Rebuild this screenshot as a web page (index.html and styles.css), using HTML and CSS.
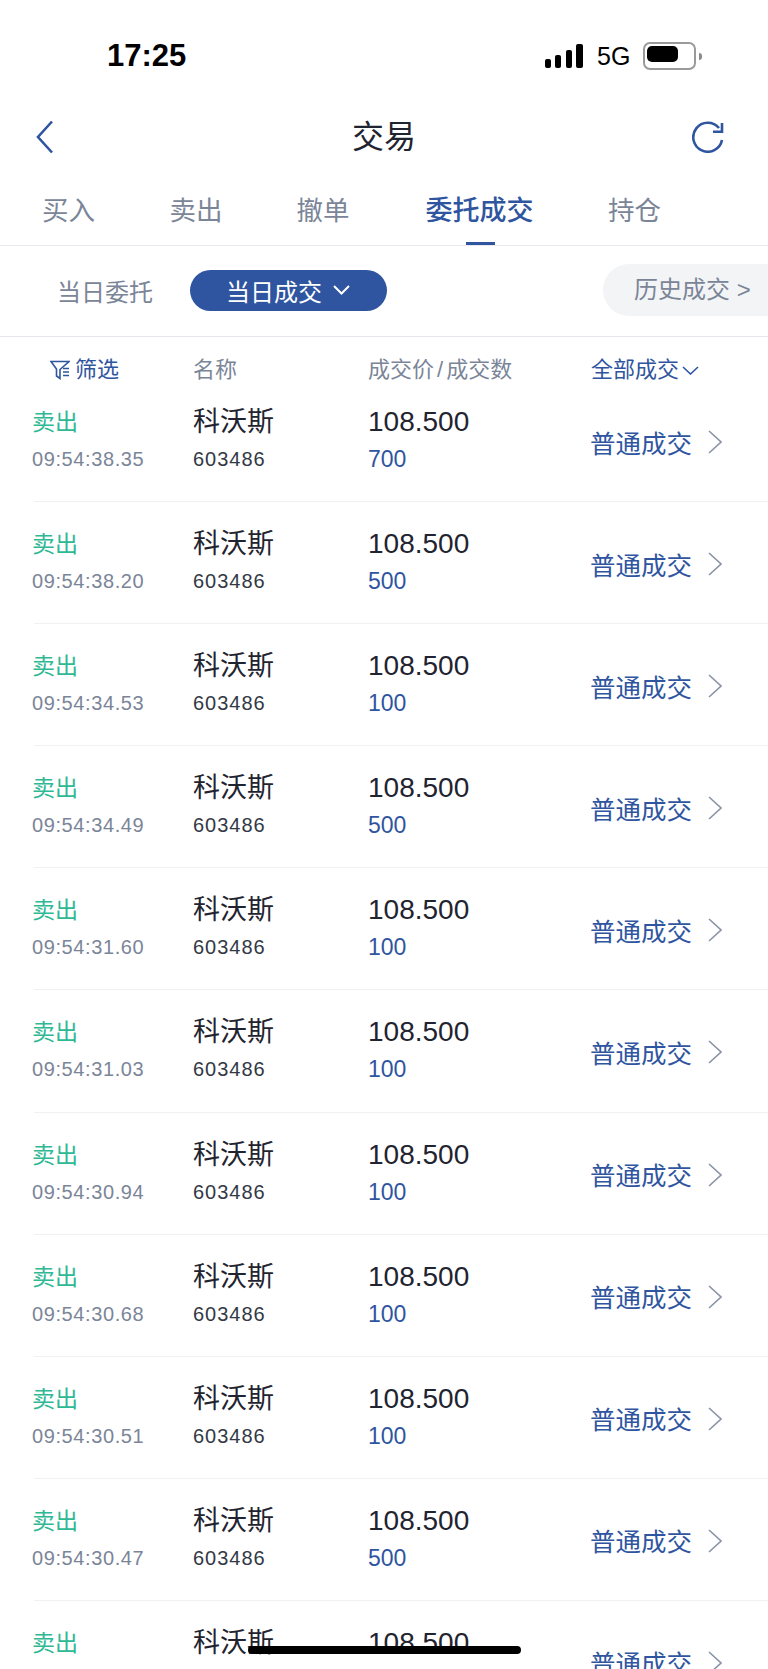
FILE: index.html
```html
<!DOCTYPE html>
<html>
<head>
    <title>交易</title>
    <link rel="stylesheet" href="styles.css">
</head>
<body>
    <div class="status">
        <div class="time">17:25</div>
        <svg class="signal" width="38" height="24" viewBox="0 0 38 24">
            <rect x="0" y="15" width="6" height="9" rx="2"/>
            <rect x="10" y="11" width="6" height="13" rx="2"/>
            <rect x="21" y="6" width="6" height="18" rx="2"/>
            <rect x="31" y="0" width="7" height="24" rx="2"/>
        </svg>
        <div class="net">5G</div>
        <div class="battery"><div class="level"></div></div>
        <div class="nub"></div>
    </div>

    <div class="nav">
        <svg class="back" width="18" height="34" viewBox="0 0 18 34">
            <path d="M16 1.5 L2 17 L16 32.5"/>
        </svg>
        <div class="title">交易</div>
        <svg class="refresh" width="32" height="32" viewBox="0 0 32 32">
            <path d="M30 19 A14.5 14.5 0 1 1 27 7"/>
            <path d="M21 10.7 H30 V2"/>
        </svg>
    </div>

    <div class="tabs">
        <div class="tab tab-buy">买入</div>
        <div class="tab tab-sell">卖出</div>
        <div class="tab tab-cancel">撤单</div>
        <div class="tab tab-active">委托成交</div>
        <div class="tab">持仓</div>
    </div>

    <div class="filters">
        <div class="today-order">当日委托</div>
        <div class="today-deal">当日成交
            <svg width="17" height="10" viewBox="0 0 17 10"><path d="M1 1 L8.5 8.5 L16 1"/></svg>
        </div>
        <div class="history">历史成交 &gt;</div>
    </div>

    <div class="thead">
        <div class="th th-filter">
            <svg width="20" height="20" viewBox="0 0 20 20">
                <path d="M1 1.5 H19 L10 9.5 V18.5 L6.5 16 V9 Z"/>
                <path d="M13 8.5 H19 M13 12 H19 M13 15.5 H19"/>
            </svg>
            筛选
        </div>
        <div class="th">名称</div>
        <div class="th">成交价<span class="slash">/</span>成交数</div>
        <div class="th th-all">全部成交
            <svg width="17" height="9" viewBox="0 0 17 9"><path d="M1 1 L8.5 8 L16 1"/></svg>
        </div>
    </div>

    <div class="row">
        <div class="side"><div class="sell">卖出</div><div class="small gray">09:54:38.35</div></div>
        <div><div class="name">科沃斯</div><div class="small code">603486</div></div>
        <div><div class="price">108.500</div><div class="qty">700</div></div>
        <div class="type">普通成交<svg width="14" height="24" viewBox="0 0 14 24"><path d="M1 1 L13 12 L1 23"/></svg></div>
    </div>
    <div class="row">
        <div class="side"><div class="sell">卖出</div><div class="small gray">09:54:38.20</div></div>
        <div><div class="name">科沃斯</div><div class="small code">603486</div></div>
        <div><div class="price">108.500</div><div class="qty">500</div></div>
        <div class="type">普通成交<svg width="14" height="24" viewBox="0 0 14 24"><path d="M1 1 L13 12 L1 23"/></svg></div>
    </div>
    <div class="row">
        <div class="side"><div class="sell">卖出</div><div class="small gray">09:54:34.53</div></div>
        <div><div class="name">科沃斯</div><div class="small code">603486</div></div>
        <div><div class="price">108.500</div><div class="qty">100</div></div>
        <div class="type">普通成交<svg width="14" height="24" viewBox="0 0 14 24"><path d="M1 1 L13 12 L1 23"/></svg></div>
    </div>
    <div class="row">
        <div class="side"><div class="sell">卖出</div><div class="small gray">09:54:34.49</div></div>
        <div><div class="name">科沃斯</div><div class="small code">603486</div></div>
        <div><div class="price">108.500</div><div class="qty">500</div></div>
        <div class="type">普通成交<svg width="14" height="24" viewBox="0 0 14 24"><path d="M1 1 L13 12 L1 23"/></svg></div>
    </div>
    <div class="row">
        <div class="side"><div class="sell">卖出</div><div class="small gray">09:54:31.60</div></div>
        <div><div class="name">科沃斯</div><div class="small code">603486</div></div>
        <div><div class="price">108.500</div><div class="qty">100</div></div>
        <div class="type">普通成交<svg width="14" height="24" viewBox="0 0 14 24"><path d="M1 1 L13 12 L1 23"/></svg></div>
    </div>
    <div class="row">
        <div class="side"><div class="sell">卖出</div><div class="small gray">09:54:31.03</div></div>
        <div><div class="name">科沃斯</div><div class="small code">603486</div></div>
        <div><div class="price">108.500</div><div class="qty">100</div></div>
        <div class="type">普通成交<svg width="14" height="24" viewBox="0 0 14 24"><path d="M1 1 L13 12 L1 23"/></svg></div>
    </div>
    <div class="row">
        <div class="side"><div class="sell">卖出</div><div class="small gray">09:54:30.94</div></div>
        <div><div class="name">科沃斯</div><div class="small code">603486</div></div>
        <div><div class="price">108.500</div><div class="qty">100</div></div>
        <div class="type">普通成交<svg width="14" height="24" viewBox="0 0 14 24"><path d="M1 1 L13 12 L1 23"/></svg></div>
    </div>
    <div class="row">
        <div class="side"><div class="sell">卖出</div><div class="small gray">09:54:30.68</div></div>
        <div><div class="name">科沃斯</div><div class="small code">603486</div></div>
        <div><div class="price">108.500</div><div class="qty">100</div></div>
        <div class="type">普通成交<svg width="14" height="24" viewBox="0 0 14 24"><path d="M1 1 L13 12 L1 23"/></svg></div>
    </div>
    <div class="row">
        <div class="side"><div class="sell">卖出</div><div class="small gray">09:54:30.51</div></div>
        <div><div class="name">科沃斯</div><div class="small code">603486</div></div>
        <div><div class="price">108.500</div><div class="qty">100</div></div>
        <div class="type">普通成交<svg width="14" height="24" viewBox="0 0 14 24"><path d="M1 1 L13 12 L1 23"/></svg></div>
    </div>
    <div class="row">
        <div class="side"><div class="sell">卖出</div><div class="small gray">09:54:30.47</div></div>
        <div><div class="name">科沃斯</div><div class="small code">603486</div></div>
        <div><div class="price">108.500</div><div class="qty">500</div></div>
        <div class="type">普通成交<svg width="14" height="24" viewBox="0 0 14 24"><path d="M1 1 L13 12 L1 23"/></svg></div>
    </div>
    <div class="row">
        <div class="side"><div class="sell">卖出</div></div>
        <div><div class="name">科沃斯</div></div>
        <div><div class="price">108.500</div></div>
        <div class="type">普通成交<svg width="14" height="24" viewBox="0 0 14 24"><path d="M1 1 L13 12 L1 23"/></svg></div>
    </div>

    <div class="home-bar"></div>
</body>
</html>
```

FILE: styles.css
```css
body {
    font-family: "Liberation Sans", "Noto Sans CJK SC", sans-serif;
    background: #ffffff;
    margin: 0;
    width: 768px;
    height: 1669px;
    overflow: hidden;
    position: relative;
    color: #1f2430;
}
svg {
    display: block;
    fill: none;
}

/* status bar */
.status {
    display: flex;
    align-items: center;
    height: 24px;
    padding: 44px 0 52px 107px;
}
.time {
    font-size: 31px;
    font-weight: bold;
    color: #000000;
    width: 438px;
}
.signal {
    fill: #000000;
}
.net {
    font-size: 25px;
    color: #000000;
    margin-left: 14px;
    width: 46px;
}
.battery {
    width: 45px;
    height: 20px;
    border: 2px solid #9a9a9a;
    border-radius: 7px;
    padding: 2px;
    box-sizing: content-box;
    margin-right: 2px;
}
.level {
    width: 31px;
    height: 16px;
    background: #000000;
    border-radius: 5px;
}
.nub {
    width: 3px;
    height: 7px;
    background: #8a8a8a;
    border-radius: 0 3px 3px 0;
    margin-left: 1px;
}

/* top nav */
.nav {
    display: flex;
    align-items: center;
    justify-content: space-between;
    height: 34px;
    padding: 0 44px 0 36px;
    margin-bottom: 39px;
}
.back path, .refresh path {
    stroke: #2f55a0;
    stroke-width: 2.6;
}
.title {
    font-size: 32px;
    line-height: 34px;
    color: #1f2430;
    margin-left: 22px;
}

/* tabs */
.tabs {
    display: flex;
    height: 52px;
    padding-left: 42px;
    border-bottom: 1px solid #e8e9ee;
}
.tab {
    font-size: 26.5px;
    line-height: 36px;
    color: #7b8598;
}
.tab-buy {
    margin-right: 74.5px;
}
.tab-sell {
    margin-right: 74px;
}
.tab-cancel {
    margin-right: 76px;
}
.tab-active {
    color: #2f55a0;
    font-weight: 500;
    font-size: 27px;
    margin-right: 74.5px;
    position: relative;
}
.tab-active::after {
    content: "";
    position: absolute;
    left: 40px;
    bottom: 0;
    width: 29px;
    height: 3px;
    background: #2f55a0;
}

/* filter bar */
.filters {
    display: flex;
    align-items: center;
    box-sizing: border-box;
    height: 91px;
    padding: 0 0 2px 57px;
    border-bottom: 1px solid #e6e7ec;
    font-size: 24px;
    color: #7b8598;
}
.today-order {
    flex: none;
    width: 133px;
}
.today-deal {
    display: flex;
    flex: none;
    align-items: center;
    gap: 11px;
    box-sizing: border-box;
    width: 197px;
    height: 41px;
    padding-left: 36px;
    background: #2f55a0;
    border-radius: 21px;
    color: #ffffff;
}
.today-deal path {
    stroke: #ffffff;
    stroke-width: 2;
}
.history {
    box-sizing: border-box;
    flex: none;
    width: 165px;
    height: 52px;
    line-height: 52px;
    margin-left: 216px;
    padding-left: 31px;
    background: #f3f4f6;
    border-radius: 26px 0 0 26px;
    white-space: nowrap;
}

/* table head */
.thead {
    display: grid;
    grid-template-columns: 143px 175px 224px 1fr;
    align-items: center;
    height: 43px;
    padding: 21px 0 0 50px;
    box-sizing: border-box;
    font-size: 22px;
    line-height: 24px;
    color: #7b8598;
}
.slash {
    margin: 0 3px;
}
.th-filter, .th-all {
    display: flex;
    align-items: center;
    color: #2f55a0;
}
.th-filter {
    gap: 5px;
}
.th-filter path, .th-all path {
    stroke: #2f55a0;
    stroke-width: 1.6;
}
.th-all {
    gap: 3px;
    margin-left: -1px;
}

/* rows */
.row {
    display: grid;
    grid-template-columns: 159px 175px 224px 1fr;
    height: 122.1px;
    box-sizing: border-box;
    margin-left: 34px;
    padding-top: 27px;
    border-bottom: 1px solid #f0f1f4;
}
.side {
    margin-left: -2px;
}
.sell {
    font-size: 23px;
    line-height: 30px;
    color: #2fb894;
}
.name {
    font-size: 27px;
    line-height: 30px;
}
.price {
    font-size: 28px;
    line-height: 30px;
}
.small {
    font-size: 20px;
    line-height: 30px;
    margin-top: 7px;
}
.gray {
    color: #7b8598;
    letter-spacing: 0.6px;
}
.code {
    color: #333845;
    letter-spacing: 1px;
}
.qty {
    font-size: 23px;
    line-height: 30px;
    margin-top: 7px;
    color: #2f55a0;
}
.type {
    display: flex;
    align-items: center;
    height: 30px;
    margin: 19px 0 0 -2px;
    font-size: 25.5px;
    color: #2f55a0;
}
.type svg {
    margin: 2px 0 0 16px;
}
.type path {
    stroke: #8a93a6;
    stroke-width: 1.6;
}

.home-bar {
    position: absolute;
    left: 248px;
    top: 1646px;
    width: 273px;
    height: 8px;
    background: #000000;
    border-radius: 4px;
}
```
